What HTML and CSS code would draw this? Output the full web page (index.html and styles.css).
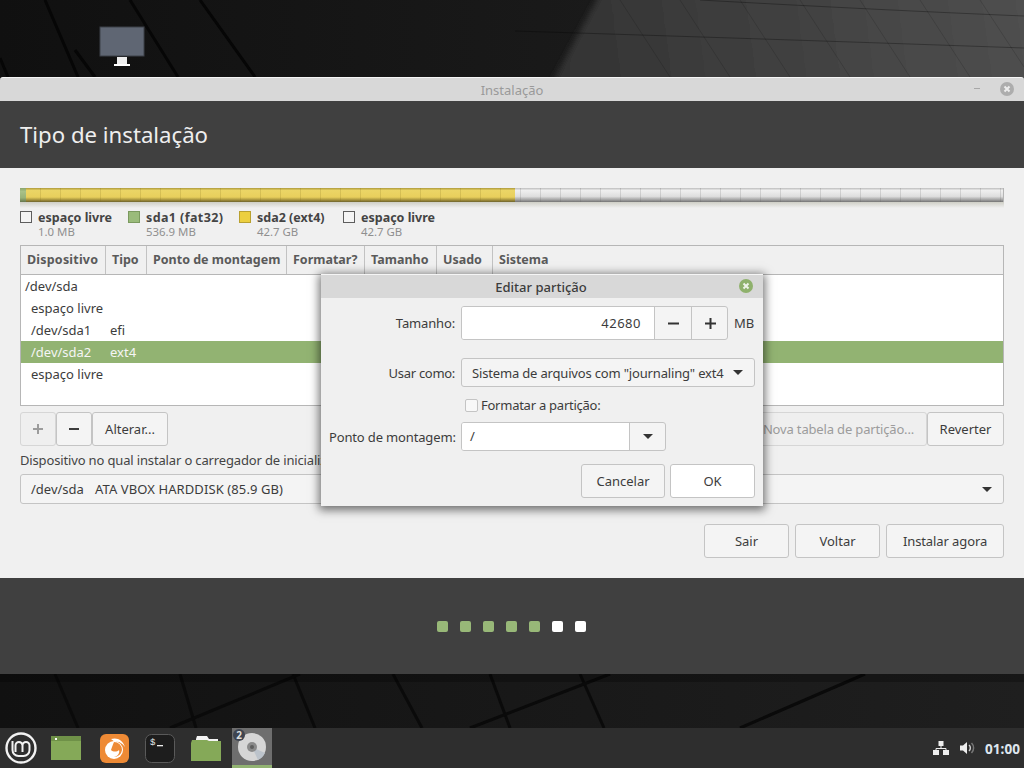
FILE: index.html
```html
<!DOCTYPE html>
<html lang="pt">
<head>
<meta charset="utf-8">
<title>Instalação</title>
<link rel="stylesheet" href="styles.css">
</head>
<body>
<div class="desktop">
  <svg class="wallpaper" width="1024" height="768" viewBox="0 0 1024 768">
    <defs>
      <linearGradient id="topg" gradientUnits="userSpaceOnUse" x1="560" y1="60" x2="1024" y2="0">
        <stop offset="0" stop-color="#333333"/>
        <stop offset="1" stop-color="#4f4f4f"/>
      </linearGradient>
      <linearGradient id="topl" gradientUnits="userSpaceOnUse" x1="0" y1="0" x2="600" y2="0">
        <stop offset="0" stop-color="#101010"/>
        <stop offset="1" stop-color="#1a1a1a"/>
      </linearGradient>
      <linearGradient id="botg" x1="0" y1="0" x2="1" y2="0">
        <stop offset="0" stop-color="#111111"/>
        <stop offset="1" stop-color="#1f1f1f"/>
      </linearGradient>
      <filter id="soft" x="-10%" y="-10%" width="120%" height="120%"><feGaussianBlur stdDeviation="3"/></filter>
    </defs>
    <rect width="1024" height="80" fill="url(#topl)"/>
    <polygon points="602,-10 1040,-10 1040,90 548,90" fill="url(#topg)" filter="url(#soft)"/>
    <g class="wp-dark">
      <path d="M45 0 L78 77"/><path d="M130 0 L178 77"/><path d="M200 0 L255 77"/><path d="M0 58 L8 77"/>
      <path d="M75 50 L95 77"/>
    </g>
    <g class="wp-faint">
      <path d="M620 0 L670 77"/><path d="M680 0 L730 77"/><path d="M740 0 L790 77"/><path d="M800 0 L850 77"/><path d="M860 0 L910 77"/><path d="M920 0 L970 77"/><path d="M980 0 L1024 67"/>
    </g>
    <g class="wp-long">
      <path d="M515 31 Q800 40 1024 48"/><path d="M700 0 Q880 10 1024 16"/>
    </g>
    <rect y="674" width="1024" height="54" fill="url(#botg)"/>
    <g class="wp-band">
      <path d="M55 674 L78 728"/><path d="M180 674 L196 728"/><path d="M293 674 L315 728"/><path d="M393 674 L422 728"/><path d="M490 674 L510 728"/><path d="M580 674 L604 728"/>
      <path d="M170 728 L300 674"/><path d="M470 728 L610 674"/><path d="M740 728 L865 674"/>
    </g>
    <rect y="674" width="1024" height="8" fill="#000" opacity=".25"/>
  </svg>

  <svg class="desk-icon" width="48" height="42" viewBox="0 0 48 42">
    <rect x="1" y="1" width="44" height="29" fill="#5f6673" stroke="#3c4048"/>
    <rect x="18" y="31" width="10" height="7" fill="#eeeeee"/>
    <rect x="15" y="38" width="16" height="2" fill="#ffffff"/>
  </svg>

  <main class="window">
    <header class="titlebar">
      <span class="title-text">Instalação</span>
      <span class="win-min"></span>
      <span class="win-close">
        <svg width="14" height="14" viewBox="0 0 14 14"><circle cx="7" cy="7" r="7" fill="#adadad"/><path d="M4.5 4.5 L9.5 9.5 M9.5 4.5 L4.5 9.5" stroke="#ededed" stroke-width="2"/></svg>
      </span>
    </header>
    <div class="page-head"><h1>Tipo de instalação</h1></div>

    <section class="content">
      <div class="disk-bar">
        <div class="seg-efi"></div>
        <div class="seg-ext4"></div>
        <div class="seg-free"></div>
      </div>
      <div class="legend">
        <div class="lg-item lg-a"><span class="swatch"></span><div><b>espaço livre</b><small>1.0 MB</small></div></div>
        <div class="lg-item lg-b"><span class="swatch sw-green"></span><div><b class="wide">sda1 (fat32)</b><small>536.9 MB</small></div></div>
        <div class="lg-item lg-c"><span class="swatch sw-yellow"></span><div><b>sda2 (ext4)</b><small>42.7 GB</small></div></div>
        <div class="lg-item"><span class="swatch"></span><div><b>espaço livre</b><small>42.7 GB</small></div></div>
      </div>

      <div class="table">
        <div class="thead">
          <span class="c1">Dispositivo</span><span class="c2">Tipo</span><span class="c3">Ponto de montagem</span><span class="c4">Formatar?</span><span class="c5">Tamanho</span><span class="c6">Usado</span><span class="c7">Sistema</span>
        </div>
        <div class="tbody">
          <div class="row root">/dev/sda</div>
          <div class="row"><span class="r1">espaço livre</span></div>
          <div class="row"><span class="r1">/dev/sda1</span><span>efi</span></div>
          <div class="row selected"><span class="r1">/dev/sda2</span><span>ext4</span></div>
          <div class="row"><span class="r1">espaço livre</span></div>
        </div>
      </div>

      <div class="toolrow">
        <button class="btn tool disabled icon-btn" aria-label="Adicionar"><svg width="10" height="10" viewBox="0 0 10 10"><path d="M0 5 H10 M5 0 V10" stroke="#9c9c9c" stroke-width="2"/></svg></button>
        <button class="btn tool icon-btn" aria-label="Remover"><svg width="10" height="10" viewBox="0 0 10 10"><path d="M0 5 H10" stroke="#3c3c3c" stroke-width="2"/></svg></button>
        <button class="btn tool alter">Alterar...</button>
        <span class="spacer"></span>
        <button class="btn tool newtable disabled">Nova tabela de partição...</button>
        <button class="btn tool revert">Reverter</button>
      </div>

      <label class="boot-label">Dispositivo no qual instalar o carregador de inicialização:</label>
      <div class="combo boot-combo"><span class="boot-dev">/dev/sda</span><span class="boot-name">ATA VBOX HARDDISK (85.9 GB)</span><i class="arrow"></i></div>

      <div class="actions">
        <button class="btn act">Sair</button>
        <button class="btn act">Voltar</button>
        <button class="btn act install">Instalar agora</button>
      </div>
    </section>

    <footer class="page-foot">
      <span class="dot"></span><span class="dot"></span><span class="dot"></span><span class="dot"></span><span class="dot"></span><span class="dot on"></span><span class="dot on"></span>
    </footer>
  </main>

  <div class="dialog">
    <div class="dlg-title">
      <span>Editar partição</span>
      <svg class="dlg-close" width="14" height="14" viewBox="0 0 14 14"><circle cx="7" cy="7" r="7" fill="#8fb16c"/><path d="M4.5 4.5 L9.5 9.5 M9.5 4.5 L4.5 9.5" stroke="#eef3e8" stroke-width="2"/></svg>
    </div>
    <div class="dlg-body">
      <div class="frow size-row">
        <label>Tamanho:</label>
        <div class="spin">
          <span class="spin-val">42680</span>
          <span class="spin-btn"><svg width="11" height="11" viewBox="0 0 11 11"><path d="M0 5.500 H11" stroke="#333" stroke-width="2"/></svg></span>
          <span class="spin-btn"><svg width="11" height="11" viewBox="0 0 11 11"><path d="M0 5.500 H11 M5.500 0 V11" stroke="#333" stroke-width="2"/></svg></span>
        </div>
        <span class="unit">MB</span>
      </div>
      <div class="frow use-row">
        <label>Usar como:</label>
        <div class="combo use-combo"><span>Sistema de arquivos com "journaling" ext4</span><i class="arrow"></i></div>
      </div>
      <div class="frow check-row">
        <label></label>
        <span class="check"></span><span class="check-text">Formatar a partição:</span>
      </div>
      <div class="frow mount-row">
        <label>Ponto de montagem:</label>
        <div class="mount"><span class="mount-val">/</span><span class="mount-btn"><i class="arrow"></i></span></div>
      </div>
      <div class="dlg-actions">
        <button class="btn dlg-btn cancel">Cancelar</button>
        <button class="btn dlg-btn ok">OK</button>
      </div>
    </div>
  </div>

  <nav class="panel">
    <svg class="mint" width="32" height="32" viewBox="0 0 32 32">
      <circle cx="16" cy="16" r="14.500" fill="#2e2e2e" stroke="#f2f2f2" stroke-width="2.400"/>
      <path d="M7.500 9 V18 a6 6 0 0 0 6 6 H18.500 a6 6 0 0 0 6 -6 V13.500 a3.500 3.500 0 0 0 -7 0 V20 M17.500 13.500 a3.500 3.500 0 0 0 -7 0 V20" fill="none" stroke="#f2f2f2" stroke-width="2"/>
    </svg>
    <span class="launcher l-win">
      <svg width="30" height="24" viewBox="0 0 30 24"><rect width="30" height="24" fill="#85a958"/><rect width="30" height="5" fill="#6f9148"/><rect x="4" y="2" width="2" height="2" fill="#fff"/></svg>
    </span>
    <span class="launcher">
      <svg width="29" height="29" viewBox="0 0 29 29"><rect width="29" height="29" rx="6" fill="#ee8a35"/><circle cx="14" cy="16" r="9" fill="#fff"/><path d="M14 8 a8 8 0 0 1 8 8 a8 8 0 0 1 -8 7 c4-1 6-4 5-7 c-2 2-6 2-8 0 c1-3 2-6 3-8z" fill="#ee8a35"/><path d="M11 5 c6-2 12 1 14 8 c-3-4-6-6-10-5z" fill="#fff"/></svg>
    </span>
    <span class="launcher">
      <svg width="30" height="29" viewBox="0 0 30 29"><rect width="29" height="28" x=".5" y=".5" rx="6" fill="#1d1d1d" stroke="#5a5a5a"/><text x="5" y="11" class="term-text">$</text><rect x="12" y="11" width="6" height="1.300" fill="#eee"/></svg>
    </span>
    <span class="launcher">
      <svg width="30" height="25" viewBox="0 0 30 25"><path d="M5 3 L6 0 H16 L18 3 H27 V6 H5z" fill="#f4f4f4"/><path d="M0 7 L1 4 H16 L18 5 H30 V25 H0z" fill="#85a958"/></svg>
    </span>
    <span class="launcher active">
      <svg width="28" height="28" viewBox="0 0 28 28"><circle cx="14" cy="14" r="14" fill="#d6d6d6"/><path d="M14 14 L27 20 A14 14 0 0 1 20 27z" fill="#bcc3cb"/><circle cx="14" cy="14" r="5" fill="#8a8a8a"/><circle cx="14" cy="14" r="2" fill="#5e5e5e"/></svg>
      <em class="badge">2</em>
    </span>
    <span class="spacer"></span>
    <svg class="tray-net" width="16" height="14" viewBox="0 0 16 14"><rect x="5.500" width="5" height="5" fill="#eee"/><rect y="9" width="6" height="5" fill="#eee"/><rect x="10" y="9" width="6" height="5" fill="#eee"/><path d="M8 5 V7.500 M3 9 V7.500 H13 V9" stroke="#eee" fill="none"/></svg>
    <svg class="tray-vol" width="16" height="14" viewBox="0 0 16 14"><path d="M0 4.500 H3 L7 1 V13 L3 9.500 H0z" fill="#eee"/><path d="M9 4 a4 4 0 0 1 0 6" stroke="#ccc" fill="none" stroke-width="1.500"/><path d="M11.500 2 a7 7 0 0 1 0 10" stroke="#777" fill="none" stroke-width="1.500"/></svg>
    <time class="clock">01:00</time>
  </nav>
</div>
</body>
</html>
```
FILE: styles.css
```css
* { box-sizing: border-box; }
html, body { margin: 0; padding: 0; }
body { font-family: "Noto Sans", sans-serif; font-size: 13px; color: #3c3c3c; background: #111; }
.desktop { position: relative; width: 1024px; height: 768px; overflow: hidden; }
.wallpaper { position: absolute; left: 0; top: 0; }
.wp-dark path { stroke: #060606; stroke-width: 3; fill: none; }
.wp-faint path { stroke: #000; stroke-opacity: .14; stroke-width: 1; fill: none; }
.wp-long path { stroke: #000; stroke-opacity: .3; stroke-width: 1; fill: none; }
.wp-band path { stroke: #0a0a0a; stroke-width: 3; fill: none; }
.desk-icon { position: absolute; left: 99px; top: 26px; }

.window { position: absolute; left: 0; top: 77px; width: 1024px; height: 597px; display: flex; flex-direction: column; }
.titlebar { height: 24px; flex: none; background: #d8d8d8; border-top: 1px solid #f5f5f5; border-radius: 3px 3px 0 0; display: flex; align-items: center; justify-content: center; position: relative; color: #9a9a9a; font-size: 13px; }
.win-min { position: absolute; left: 974px; top: 10px; width: 6px; height: 1px; background: #a8a8a8; }
.win-close { position: absolute; left: 1000px; top: 4px; height: 14px; }
.page-head { height: 67px; flex: none; background: #404040; display: flex; align-items: center; padding: 0 20px; }
.page-head h1 { margin: 0; font-size: 22.200px; font-weight: 400; color: #eeeeee; }

.content { height: 410px; flex: none; background: #f0f0f0; padding: 20px 20px 0; display: flex; flex-direction: column; }
.disk-bar { display: flex; height: 14px; position: relative; }
.disk-bar::before { content: ""; position: absolute; left: 0; right: 0; top: 14px; height: 6px; background: linear-gradient(#cfcfc6, #f0f0f0); }
.seg-efi { width: 6px; background: linear-gradient(#8aa56c, #a8c188 25%, #98b278 70%, #66764e); }
.seg-ext4 { width: 489px; background-image: linear-gradient(90deg, rgba(120,100,20,.18) 1px, transparent 1px), linear-gradient(#ad9a3c, #ebd566 18%, #e8cf5c 65%, #8d7c33 92%, #6d6430); background-size: 20px 100%, 100% 100%; background-position: 14px 0, 0 0; }
.seg-free { flex: 1; background-image: linear-gradient(90deg, rgba(90,90,90,.18) 1px, transparent 1px), linear-gradient(#bdbdbd, #efefef 18%, #dedede 60%, #a0a0a0 85%, #737373); background-size: 20px 100%, 100% 100%; background-position: 5px 0, 0 0; border-right: 1px solid #b5b5b5; }

.legend { display: flex; margin-top: 8px; height: 29px; }
.lg-item { display: flex; gap: 6px; flex: none; }
.lg-a { width: 108px; }
.lg-b { width: 111px; }
.lg-c { width: 104px; }
.lg-item b { display: block; font-weight: 700; font-size: 12.500px; color: #444; line-height: 15px; }
.lg-item b.wide { letter-spacing: .4px; }
.lg-item small { display: block; font-size: 11.400px; color: #8f8f8f; line-height: 14px; }
.swatch { width: 12px; height: 12px; margin-top: 1px; border: 1px solid #5d5d5d; background: #f4f4f4; flex: none; }
.sw-green { background: #9abb7b; border-color: #7b9a5f; }
.sw-yellow { background: #eccf40; border-color: #b9a130; }

.table { margin-top: 6px; height: 161px; border: 1px solid #b6b6b6; background: #fff; display: flex; flex-direction: column; flex: none; }
.thead { height: 29px; flex: none; display: flex; background: #f0f0f0; border-bottom: 1px solid #b6b6b6; font-weight: 700; font-size: 12.500px; color: #5a5a5a; line-height: 28px; }
.thead span { padding-left: 6px; border-right: 1px solid #c2c2c2; flex: none; white-space: nowrap; overflow: hidden; }
.thead .c1 { width: 85px; letter-spacing: .2px; }
.c2 { width: 41px; }
.c3 { width: 140px; }
.c4 { width: 78px; }
.c5 { width: 72px; }
.c6 { width: 56px; }
.thead .c7 { flex: 1; border-right: 0; }
.tbody { flex: 1; }
.row { height: 22px; line-height: 22px; padding-left: 10px; display: flex; color: #3c3c3c; }
.row.root { padding-left: 4px; }
.r1 { width: 79px; flex: none; }
.row.selected { background: #92b372; color: #f5f5f5; }

.btn { font: inherit; color: #3c3c3c; background: #f4f4f4; border: 1px solid #c4c4c4; border-radius: 3px; padding: 0; }
.toolrow { display: flex; margin-top: 6px; height: 34px; flex: none; }
.tool { height: 34px; flex: none; }
.icon-btn { width: 36px; display: flex; align-items: center; justify-content: center; }
.alter { width: 76px; }
.disabled { color: #9c9c9c; border-color: #d6d6d6; background: #efefef; }
.spacer { flex: 1; }
.newtable { width: 177px; letter-spacing: -.16px; }
.revert { width: 77px; }
.boot-label { margin-top: 6px; height: 20px; line-height: 16px; display: block; color: #444; white-space: nowrap; letter-spacing: -.15px; }
.combo { display: flex; align-items: center; border: 1px solid #c4c4c4; border-radius: 3px; background: #f4f4f4; color: #3c3c3c; }
.boot-combo { height: 30px; margin-top: 2px; padding: 0 11px 0 10px; }
.boot-dev { width: 64px; flex: none; }
.boot-name { letter-spacing: .1px; }
.arrow { display: block; width: 0; height: 0; border: 5px solid transparent; border-top: 5px solid #333; border-bottom: 0; margin-left: auto; }
.actions { display: flex; justify-content: flex-end; gap: 6px; margin-top: 20px; flex: none; }
.act { height: 34px; width: 85px; }
.install { width: 118px; letter-spacing: -.1px; }

.page-foot { height: 96px; flex: none; background: #404040; display: flex; align-items: center; justify-content: center; gap: 12px; padding-right: 1px; }
.dot { width: 11px; height: 11px; border-radius: 2px; background: #98b878; }
.dot.on { background: #fff; }

.dialog { position: absolute; left: 321px; top: 274px; width: 442px; height: 232px; background: #f0f0f0; box-shadow: 0 2px 9px 2px rgba(0,0,0,.55); display: flex; flex-direction: column; }
.dlg-title { height: 24px; flex: none; background: #d8d8d8; display: flex; align-items: center; justify-content: center; position: relative; color: #3c3c3c; border-top: 1px solid #f5f5f5; font-weight: 500; padding-right: 2px; }
.dlg-close { position: absolute; left: 418px; top: 4px; }
.dlg-body { padding: 8px 8px 0; flex: 1; display: flex; flex-direction: column; }
.frow { display: flex; align-items: center; }
.frow label { width: 126px; text-align: right; flex: none; margin-right: 6px; white-space: nowrap; letter-spacing: -.15px; }
.frow.use-row label { letter-spacing: -.3px; }
.size-row { height: 34px; }
.spin { width: 267px; height: 34px; border: 1px solid #c4c4c4; border-radius: 3px; display: flex; overflow: hidden; background: #f4f4f4; flex: none; }
.spin-val { width: 192px; flex: none; background: #fff; text-align: right; padding-right: 13px; line-height: 32px; letter-spacing: .5px; }
.spin-btn { width: 37px; flex: none; border-left: 1px solid #c4c4c4; display: flex; align-items: center; justify-content: center; }
.unit { margin-left: 6px; }
.use-row { margin-top: 18px; height: 29px; }
.use-combo { width: 294px; height: 29px; padding: 0 11px 0 10px; white-space: nowrap; letter-spacing: -.17px; }
.check-row { margin-top: 9px; height: 18px; }
.check { width: 13px; height: 13px; border: 1px solid #c4c4c4; border-radius: 2px; background: #f8f8f8; margin: 0 3px 0 4px; flex: none; }
.check-text { letter-spacing: -.25px; }
.mount-row { margin-top: 8px; height: 29px; }
.mount { width: 205px; height: 29px; display: flex; border: 1px solid #c4c4c4; border-radius: 3px; background: #f4f4f4; overflow: hidden; }
.mount-val { width: 167px; flex: none; background: #fff; padding-left: 8px; line-height: 27px; }
.mount-btn { flex: 1; border-left: 1px solid #c4c4c4; display: flex; align-items: center; justify-content: center; }
.mount-btn .arrow { margin: 0; }
.dlg-actions { display: flex; justify-content: flex-end; gap: 5px; margin-top: 13px; }
.dlg-btn { width: 85px; height: 34px; }
.cancel { width: 84px; }
.ok { background: #fff; }

.panel { position: absolute; left: 0; top: 728px; width: 1024px; height: 40px; background: #2e2e2e; display: flex; align-items: center; }
.mint { margin-left: 5px; flex: none; }
.launcher { display: flex; width: 46px; height: 40px; align-items: center; justify-content: center; flex: none; position: relative; }
.l-win { margin-left: 6px; width: 48px; padding-right: 2px; }
.active { width: 40px; margin-left: 3px; background: #6e6e6e; border-bottom: 3px solid #92b372; }
.badge { position: absolute; left: 1px; top: 1px; width: 12px; height: 12px; border-radius: 50%; background: #3e4450; color: #ddd; font-style: normal; font-size: 10px; font-weight: 700; text-align: center; line-height: 12px; }
.term-text { font-family: "Liberation Mono", monospace; font-size: 9px; fill: #eee; }
.tray-net { margin-right: 11px; flex: none; }
.tray-vol { margin-right: 9px; flex: none; }
.clock { color: #dfe6ee; font-weight: 700; font-size: 13.600px; margin-right: 4px; }
```
